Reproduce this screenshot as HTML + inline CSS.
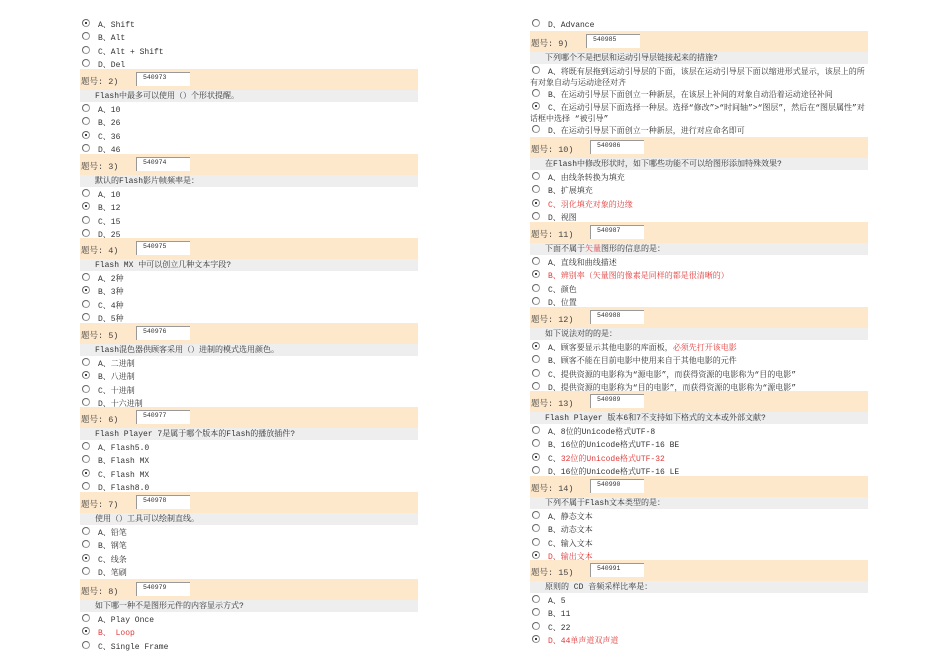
<!DOCTYPE html>
<html><head><meta charset="utf-8"><style>
*{margin:0;padding:0;box-sizing:border-box}
body{width:950px;height:672px;background:#fff;position:relative;overflow:hidden;font-family:"Liberation Mono","Noto Serif CJK SC",monospace;font-size:8px;color:#333}
.b{position:absolute;width:338px}
.h{height:21px;background:#fde8cc;position:relative}
.h .l{position:absolute;left:1px;top:8px;font-size:8.5px;color:#444;line-height:10px}
.h .bx{position:absolute;left:56px;top:3px;width:54px;height:14px;background:#fff;border-top:1px solid #999;border-left:1px solid #999;font-size:6.5px;padding:1px 0 0 6px}
.q{height:12px;background:#eee;padding-left:15px;line-height:13px}
.o{position:relative;z-index:2;top:2px;padding-left:18px;line-height:13.3px;height:13.3px;white-space:nowrap}
.o i{position:absolute;left:2px;top:0px;width:8px;height:8px;border-radius:50%;border:1px solid #999;border-top-color:#666;border-left-color:#666;background:#fff}
.o i.c::after{content:"";position:absolute;left:2px;top:2px;width:2px;height:2px;border-radius:50%;background:#000}
.r{color:#e03a3a}
.w{white-space:normal;height:auto;line-height:11px;padding-top:1px;padding-left:0;text-indent:18px}
</style></head><body>

<div class="b" style="left:80px;top:17px">
<div class="o"><i class="c"></i>A、Shift</div>
<div class="o"><i></i>B、Alt</div>
<div class="o"><i></i>C、Alt + Shift</div>
<div class="o"><i></i>D、Del</div>
</div>

<div class="b" style="left:80px;top:69px">
<div class="h"><span class="l">题号: 2)</span><span class="bx">540973</span></div>
<div class="q">Flash中最多可以使用（）个形状提醒。</div>
<div class="o"><i></i>A、10</div><div class="o"><i></i>B、26</div><div class="o"><i class="c"></i>C、36</div><div class="o"><i></i>D、46</div>
</div>

<div class="b" style="left:80px;top:154px">
<div class="h"><span class="l">题号: 3)</span><span class="bx">540974</span></div>
<div class="q">默认的Flash影片帧频率是：</div>
<div class="o"><i></i>A、10</div><div class="o"><i class="c"></i>B、12</div><div class="o"><i></i>C、15</div><div class="o"><i></i>D、25</div>
</div>

<div class="b" style="left:80px;top:238px">
<div class="h"><span class="l">题号: 4)</span><span class="bx">540975</span></div>
<div class="q">Flash MX 中可以创立几种文本字段?</div>
<div class="o"><i></i>A、2种</div><div class="o"><i class="c"></i>B、3种</div><div class="o"><i></i>C、4种</div><div class="o"><i></i>D、5种</div>
</div>

<div class="b" style="left:80px;top:323px">
<div class="h"><span class="l">题号: 5)</span><span class="bx">540976</span></div>
<div class="q">Flash混色器供顾客采用（）进制的模式选用颜色。</div>
<div class="o"><i></i>A、二进制</div><div class="o"><i class="c"></i>B、八进制</div><div class="o"><i></i>C、十进制</div><div class="o"><i></i>D、十六进制</div>
</div>

<div class="b" style="left:80px;top:407px">
<div class="h"><span class="l">题号: 6)</span><span class="bx">540977</span></div>
<div class="q">Flash Player 7是属于哪个版本的Flash的播放插件?</div>
<div class="o"><i></i>A、Flash5.0</div><div class="o"><i></i>B、Flash MX</div><div class="o"><i class="c"></i>C、Flash MX</div><div class="o"><i></i>D、Flash8.0</div>
</div>

<div class="b" style="left:80px;top:492px">
<div class="h"><span class="l">题号: 7)</span><span class="bx">540978</span></div>
<div class="q">使用（）工具可以绘制直线。</div>
<div class="o"><i></i>A、铅笔</div><div class="o"><i></i>B、钢笔</div><div class="o"><i class="c"></i>C、线条</div><div class="o"><i></i>D、笔刷</div>
</div>

<div class="b" style="left:80px;top:579px">
<div class="h"><span class="l">题号: 8)</span><span class="bx">540979</span></div>
<div class="q">如下哪一种不是图形元件的内容显示方式?</div>
<div class="o"><i></i>A、Play Once</div><div class="o r"><i class="c"></i>B、 Loop</div><div class="o"><i></i>C、Single Frame</div>
</div>

<!-- right -->
<div class="b" style="left:530px;top:17px">
<div class="o"><i></i>D、Advance</div>
</div>

<div class="b" style="left:530px;top:31px">
<div class="h"><span class="l">题号: 9)</span><span class="bx">540985</span></div>
<div class="q">下列哪个不是把层和运动引导层链接起来的措施?</div>
<div class="o w"><i></i>A、将既有层拖到运动引导层的下面，该层在运动引导层下面以缩进形式显示，该层上的所有对象自动与运动途径对齐</div>
<div class="o"><i></i>B、在运动引导层下面创立一种新层，在该层上补间的对象自动沿着运动途径补间</div>
<div class="o w"><i class="c"></i>C、在运动引导层下面选择一种层。选择“修改”>“时间轴”>“图层”，然后在“图层属性”对话框中选择 “被引导”</div>
<div class="o"><i></i>D、在运动引导层下面创立一种新层，进行对应命名即可</div>
</div>

<div class="b" style="left:530px;top:137px">
<div class="h"><span class="l">题号: 10)</span><span class="bx" style="left:60px">540986</span></div>
<div class="q">在Flash中修改形状时，如下哪些功能不可以给图形添加特殊效果?</div>
<div class="o"><i></i>A、由线条转换为填充</div><div class="o"><i></i>B、扩展填充</div><div class="o r"><i class="c"></i>C、羽化填充对象的边缘</div><div class="o"><i></i>D、视图</div>
</div>

<div class="b" style="left:530px;top:222px">
<div class="h"><span class="l">题号: 11)</span><span class="bx" style="left:60px">540987</span></div>
<div class="q">下面不属于<span class="r">矢量</span>图形的信息的是：</div>
<div class="o"><i></i>A、直线和曲线描述</div><div class="o r"><i class="c"></i>B、辨别率（矢量图的像素是同样的都是很清晰的）</div><div class="o"><i></i>C、颜色</div><div class="o"><i></i>D、位置</div>
</div>

<div class="b" style="left:530px;top:307px">
<div class="h"><span class="l">题号: 12)</span><span class="bx" style="left:60px">540988</span></div>
<div class="q">如下说法对的的是：</div>
<div class="o"><i class="c"></i>A、顾客要显示其他电影的库面板，<span class="r">必须先打开该电影</span></div><div class="o"><i></i>B、顾客不能在目前电影中使用来自于其他电影的元件</div><div class="o"><i></i>C、提供资源的电影称为“源电影”，而获得资源的电影称为“目的电影”</div><div class="o"><i></i>D、提供资源的电影称为“目的电影”，而获得资源的电影称为“源电影”</div>
</div>

<div class="b" style="left:530px;top:391px">
<div class="h"><span class="l">题号: 13)</span><span class="bx" style="left:60px">540989</span></div>
<div class="q">Flash Player 版本6和7不支持如下格式的文本或外部文献?</div>
<div class="o"><i></i>A、8位的Unicode格式UTF-8</div><div class="o"><i></i>B、16位的Unicode格式UTF-16 BE</div><div class="o"><i class="c"></i>C、<span class="r">32位的Unicode格式UTF-32</span></div><div class="o"><i></i>D、16位的Unicode格式UTF-16 LE</div>
</div>

<div class="b" style="left:530px;top:476px">
<div class="h"><span class="l">题号: 14)</span><span class="bx" style="left:60px">540990</span></div>
<div class="q">下列不属于Flash文本类型的是：</div>
<div class="o"><i></i>A、静态文本</div><div class="o"><i></i>B、动态文本</div><div class="o"><i></i>C、输入文本</div><div class="o r"><i class="c"></i>D、输出文本</div>
</div>

<div class="b" style="left:530px;top:560px">
<div class="h"><span class="l">题号: 15)</span><span class="bx" style="left:60px">540991</span></div>
<div class="q">原则的 CD 音频采样比率是：</div>
<div class="o"><i></i>A、5</div><div class="o"><i></i>B、11</div><div class="o"><i></i>C、22</div><div class="o r"><i class="c"></i>D、44单声道双声道</div>
</div>

</body></html>
